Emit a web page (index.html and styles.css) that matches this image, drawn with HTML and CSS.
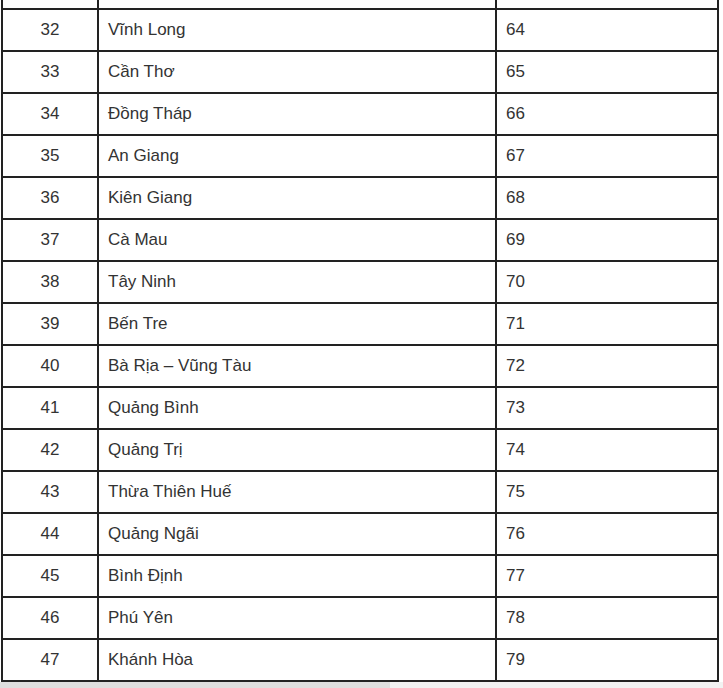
FILE: index.html
```html
<!DOCTYPE html>
<html lang="vi">
<head>
<meta charset="utf-8">
<link rel="stylesheet" href="styles.css">
</head>
<body>
<div class="page">
<table class="plates">
<tbody>
<tr class="spacer"><td class="num"></td><td></td><td></td></tr>
<tr><td class="num">32</td><td>Vĩnh Long</td><td>64</td></tr>
<tr><td class="num">33</td><td>Cần Thơ</td><td>65</td></tr>
<tr><td class="num">34</td><td>Đồng Tháp</td><td>66</td></tr>
<tr><td class="num">35</td><td>An Giang</td><td>67</td></tr>
<tr><td class="num">36</td><td>Kiên Giang</td><td>68</td></tr>
<tr><td class="num">37</td><td>Cà Mau</td><td>69</td></tr>
<tr><td class="num">38</td><td>Tây Ninh</td><td>70</td></tr>
<tr><td class="num">39</td><td>Bến Tre</td><td>71</td></tr>
<tr><td class="num">40</td><td>Bà Rịa – Vũng Tàu</td><td>72</td></tr>
<tr><td class="num">41</td><td>Quảng Bình</td><td>73</td></tr>
<tr><td class="num">42</td><td>Quảng Trị</td><td>74</td></tr>
<tr><td class="num">43</td><td>Thừa Thiên Huế</td><td>75</td></tr>
<tr><td class="num">44</td><td>Quảng Ngãi</td><td>76</td></tr>
<tr><td class="num">45</td><td>Bình Định</td><td>77</td></tr>
<tr><td class="num">46</td><td>Phú Yên</td><td>78</td></tr>
<tr><td class="num">47</td><td>Khánh Hòa</td><td>79</td></tr>
</tbody>
</table>
<div class="scrollbar"><div class="thumb"></div></div>
</div>
</body>
</html>
```
FILE: styles.css
```css
html, body {
  margin: 0;
  padding: 0;
  background: #fff;
  overflow: hidden;
}
.page {
  width: 723px;
  height: 688px;
  overflow: hidden;
}
.plates {
  margin-top: -34px;
  margin-left: 1px;
  border-collapse: collapse;
  width: 718px;
  table-layout: fixed;
  font-family: "Liberation Sans", Arial, sans-serif;
  font-size: 17px;
  color: #333;
}
.plates td {
  border: 2px solid #222;
  height: 42px;
  padding: 0 9px;
  box-sizing: border-box;
  vertical-align: middle;
}
.plates td:nth-child(1) { width: 96px; }
.plates td:nth-child(2) { width: 398px; }
.plates td.num { text-align: center; }
.scrollbar {
  height: 8px;
  background: #f2f2f2;
}
.thumb {
  width: 390px;
  height: 8px;
  background: #dedede;
}
```
